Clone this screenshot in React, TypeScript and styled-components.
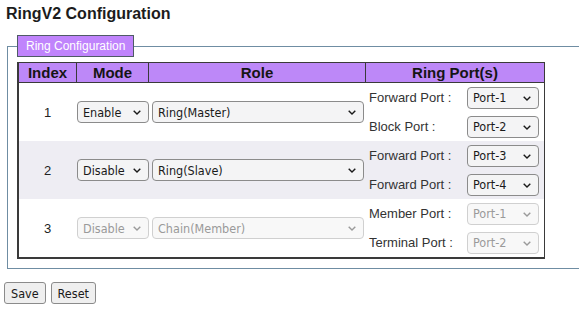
import styled, { createGlobalStyle } from "styled-components";

const GlobalStyle = createGlobalStyle`
    html, body {
        margin: 0;
        padding: 0;
        overflow: hidden;
        background: #ffffff;
    }
    body {
        font-family: "Liberation Sans", Arial, sans-serif;
        color: #333333;
    }
`

const Pagina = styled.main`
    width: 579px;
    box-sizing: border-box;
    padding: 4px 0 0 4px;
`

const Titulo = styled.h2`
    font-size: 16px;
    font-weight: 700;
    line-height: 20px;
    margin: 0 0 11px 2px;
    color: #1c1c1c;
`

const Quadro = styled.fieldset`
    margin: 0 0 0 3px;
    padding: 0 0 9px 9px;
    border: 1px solid #6f8da3;
    border-right: none;
    min-width: 0;
`

const Legenda = styled.legend`
    margin-left: 0;
    padding: 3px 8px 3px 8px;
    background: #c084fc;
    border: 1px solid #4f5b66;
    color: #ffffff;
    font-size: 12px;
    line-height: 14px;
`

const Tabela = styled.div`
    margin-top: 5px;
    width: 528px;
    border: 1px solid #3a3a3a;
    border-left-width: 2px;
    border-bottom-width: 2px;
    box-sizing: border-box;
`

const colunas = '57px 72px 217px 1fr';

const Cabecalho = styled.div`
    display: grid;
    grid-template-columns: ${colunas};
    background: #bd88f8;
    border-bottom: 1px solid #3a3a3a;
`

const CelulaCab = styled.div`
    font-size: 15px;
    font-weight: 700;
    line-height: 19px;
    text-align: center;
    color: #151515;
    border-left: 1px solid #3a3a3a;

    &:first-child {
        border-left: none;
    }
`

const Linha = styled.div<{ $cinza?: boolean }>`
    display: flex;
    align-items: center;
    height: 58px;
    background: ${p => (p.$cinza ? '#eeedf3' : '#ffffff')};
`

const Indice = styled.div`
    width: 57px;
    text-align: center;
    font-size: 13px;
    color: #222222;
`

const Portas = styled.div`
    margin-left: auto;
    width: 180px;
    display: flex;
    flex-direction: column;
    gap: 7px;
    padding: 0 5px 0 5px;
    box-sizing: border-box;
`

const LinhaPorta = styled.div`
    display: flex;
    align-items: center;
    justify-content: space-between;
    font-size: 13px;
    color: #333333;
`

const CaixaSelecao = styled.div<{ $largura: number; $margem?: number }>`
    position: relative;
    width: ${p => p.$largura}px;
    margin-left: ${p => p.$margem ?? 0}px;
    height: 22px;
    flex-shrink: 0;
`

const Selecao = styled.select`
    appearance: none;
    -webkit-appearance: none;
    width: 100%;
    height: 100%;
    box-sizing: border-box;
    margin: 0;
    padding: 0 18px 0 5px;
    border: 1px solid #8b8b8b;
    border-radius: 4px;
    background: #f4f4f5;
    font-family: "DejaVu Sans Condensed", "DejaVu Sans", sans-serif;
    font-size: 12.5px;
    color: #1a1a1a;
    outline: none;

    &:disabled {
        border-color: #d0d0d0;
        background: #f8f8f8;
        color: #9a9a9a;
        opacity: 1;
    }
`

const Seta = styled.svg<{ $apagada?: boolean }>`
    position: absolute;
    right: 8px;
    top: 50%;
    margin-top: -2px;
    width: 8px;
    height: 5px;
    pointer-events: none;
    stroke: ${p => (p.$apagada ? '#9a9a9a' : '#1a1a1a')};
`

const Rodape = styled.div`
    display: flex;
    gap: 5px;
    margin-top: 13px;
`

const Botao = styled.button`
    height: 22px;
    padding: 0 6px;
    border: 1px solid #8b8b8b;
    border-radius: 3px;
    background: #efefef;
    font-family: "DejaVu Sans Condensed", "DejaVu Sans", sans-serif;
    font-size: 12.5px;
    color: #1a1a1a;
`

type CampoProps = {
    largura: number;
    margem?: number;
    valor: string;
    opcoes: string[];
    desativado?: boolean;
}

function Campo({ largura, margem, valor, opcoes, desativado }: CampoProps) {
    return (
        <CaixaSelecao $largura={largura} $margem={margem}>
            <Selecao defaultValue={valor} disabled={desativado}>
                {opcoes.map(o => <option key={o} value={o}>{o}</option>)}
            </Selecao>
            <Seta $apagada={desativado} viewBox="0 0 8 5" fill="none" strokeWidth="1.4">
                <path d="M0.7 0.7 L4 4 L7.3 0.7" />
            </Seta>
        </CaixaSelecao>
    )
}

const modos = ['Enable', 'Disable'];
const papeis = ['Ring(Master)', 'Ring(Slave)', 'Chain(Member)'];
const portas = ['Port-1', 'Port-2', 'Port-3', 'Port-4'];

const aneis = [
    { id: 1, modo: 'Enable', papel: 'Ring(Master)', p1: ['Forward Port :', 'Port-1'], p2: ['Block Port :', 'Port-2'] },
    { id: 2, modo: 'Disable', papel: 'Ring(Slave)', p1: ['Forward Port :', 'Port-3'], p2: ['Forward Port :', 'Port-4'] },
    { id: 3, modo: 'Disable', papel: 'Chain(Member)', p1: ['Member Port :', 'Port-1'], p2: ['Terminal Port :', 'Port-2'], off: true },
];

function App() {
    return (
        <Pagina>
            <GlobalStyle />
            <Titulo>RingV2 Configuration</Titulo>
            <Quadro>
                <Legenda>Ring Configuration</Legenda>
                <Tabela>
                    <Cabecalho>
                        <CelulaCab>Index</CelulaCab>
                        <CelulaCab>Mode</CelulaCab>
                        <CelulaCab>Role</CelulaCab>
                        <CelulaCab>Ring Port(s)</CelulaCab>
                    </Cabecalho>
                    {aneis.map(a => (
                        <Linha key={a.id} $cinza={a.id === 2}>
                            <Indice>{a.id}</Indice>
                            <Campo largura={72} margem={1} valor={a.modo} opcoes={modos} desativado={a.off} />
                            <Campo largura={212} margem={3} valor={a.papel} opcoes={papeis} desativado={a.off} />
                            <Portas>
                                <LinhaPorta>
                                    {a.p1[0]}
                                    <Campo largura={72} valor={a.p1[1]} opcoes={portas} desativado={a.off} />
                                </LinhaPorta>
                                <LinhaPorta>
                                    {a.p2[0]}
                                    <Campo largura={72} valor={a.p2[1]} opcoes={portas} desativado={a.off} />
                                </LinhaPorta>
                            </Portas>
                        </Linha>
                    ))}
                </Tabela>
            </Quadro>
            <Rodape>
                <Botao>Save</Botao>
                <Botao>Reset</Botao>
            </Rodape>
        </Pagina>
    )
}

export default App;
